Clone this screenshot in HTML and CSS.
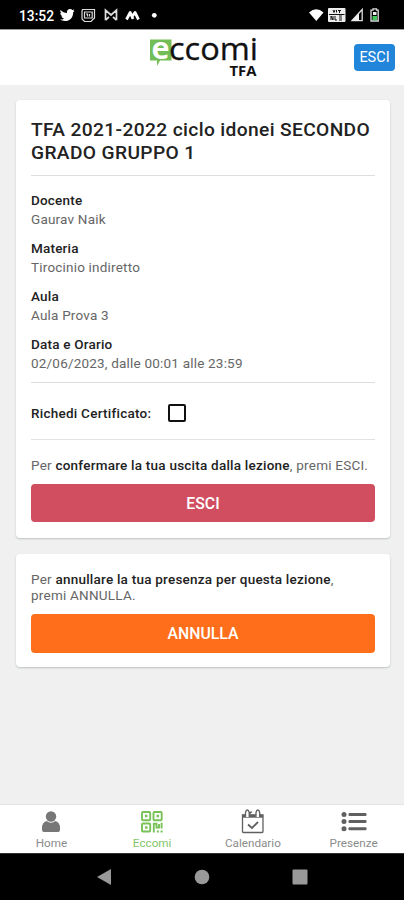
FILE: index.html
```html
<!DOCTYPE html>
<html lang="it">
<head>
<meta charset="utf-8">
<meta name="viewport" content="width=device-width, initial-scale=1">
<title>Eccomi TFA</title>
<link rel="stylesheet" href="styles.css">
</head>
<body>
<div class="status">
  <span class="clock">13:52</span>
  <svg class="status-left" width="100" height="18" viewBox="0 0 100 18">
    <path fill="#fff" d="M0.5 3C2.5 5 4.5 5.8 7 5.9C6.6 3.5 8.2 2 10 2C11 2 11.8 2.4 12.4 3L14.2 2.4L13.3 4L14.6 3.7L13.1 5.4C13.2 10.5 9.8 14 5 14C3 14 1.3 13.5 0 12.6C1.7 12.7 3 12.2 4.1 11.4C2.7 11.2 1.8 10.4 1.4 9.2H2.7C1.2 8.7.3 7.5.3 6L1.6 6.3C.4 5.3 0 4.3.5 3Z"/>
    <path fill="none" stroke="#ddd" stroke-width="1.2" d="M22.5 2.5H34.5V11L31 14.5H24.5L22 12V4Z"/>
    <path fill="none" stroke="#ddd" stroke-width="1.2" d="M24.5 5H32.2V11H24.5ZM26 7H27.5V9.5M29.5 7V9.5"/>
    <path fill="none" stroke="#ddd" stroke-width="1.7" d="M45.500 13.200V3.200L51 8L56.500 3.200V13.200M45.500 13L49 10M56.500 13L53 10"/>
    <path fill="none" stroke="#fff" stroke-width="2.800" stroke-linejoin="round" d="M66.500 12.500L70.200 5.500L73 12M72.500 9L75 5.500L78.500 12.500"/>
    <circle cx="94.300" cy="8.300" r="2.400" fill="#fff"/>
  </svg>
  <svg class="status-right" width="72" height="18" viewBox="0 0 72 18">
    <path fill="#fff" d="M0 5.500Q7.300-1.200 14.500 5.500L7.300 14Z"/>
    <rect x="19" y="1" width="17.500" height="14" rx="1" fill="#eee"/>
    <path stroke="#111" stroke-width="1" fill="none" d="M24 3L25 5.500L26 3M27.500 3V5.500M29 3.500H32M30.500 3.500V6M22 13V9L24 13V9M26 9V13H28M30 9H33M30 11H33M30 13H33M20 7.500H35.500"/>
    <path fill="none" stroke="#ddd" stroke-width="1.300" d="M43 13.600H53.200V2.500Z"/>
    <path fill="#eee" d="M42.500 14L50 6V14Z"/>
    <path fill="none" stroke="#ddd" stroke-width="1.300" d="M62 3.200H64V1.800H67.500V3.200H69.200V14H62Z"/>
    <rect x="63.500" y="9" width="4.500" height="4.200" fill="#43c95b"/>
    <path fill="#eee" d="M64 5H67.500V8H64Z"/>
  </svg>
</div>
<header class="header">
  <svg class="logo" width="112" height="54" viewBox="0 0 112 54">
    <path fill="#72bd55" d="M2 9.500H23.500V30.500H12L9 36V30.500H2Z"/>
    <text class="logo-e" x="3.500" y="29" textLength="18" lengthAdjust="spacingAndGlyphs">e</text>
    <text class="logo-name" x="21" y="30" textLength="89" lengthAdjust="spacingAndGlyphs">ccomi</text>
    <text class="logo-sub" x="81.500" y="46" textLength="27" lengthAdjust="spacingAndGlyphs">TFA</text>
  </svg>
  <button class="exit">ESCI</button>
</header>
<main class="content">
  <section class="card lesson">
    <h1>TFA 2021-2022 ciclo idonei SECONDO<br>GRADO GRUPPO 1</h1>
    <dl>
      <dt>Docente</dt><dd>Gaurav Naik</dd>
      <dt>Materia</dt><dd>Tirocinio indiretto</dd>
      <dt>Aula</dt><dd>Aula Prova 3</dd>
      <dt>Data e Orario</dt><dd>02/06/2023, dalle 00:01 alle 23:59</dd>
    </dl>
    <label class="certificate"><b>Richedi Certificato:</b><span class="box"></span></label>
    <p class="confirm">Per <b>confermare la tua uscita dalla lezione</b>, premi ESCI.</p>
    <button class="action red">ESCI</button>
  </section>
  <section class="card cancel">
    <p class="annul">Per <b>annullare la tua presenza per questa lezione</b>,<br>premi ANNULLA.</p>
    <button class="action orange">ANNULLA</button>
  </section>
</main>
<nav class="tabs">
  <a class="tab"><svg width="26" height="26" viewBox="0 0 26 26"><circle cx="13" cy="7.500" r="5.200" fill="#777"/><path fill="#777" d="M8.500 12Q13 15.500 17.500 12Q22 13.500 22 19V21Q22 23 20 23H6Q4 23 4 21V19Q4 13.500 8.500 12Z"/></svg><span>Home</span></a>
  <a class="tab active"><svg width="26" height="26" viewBox="0 0 26 26" fill="none" stroke="#78c257" stroke-width="1.900"><rect x="3" y="3" width="8.200" height="8.200" rx="1"/><rect x="14.500" y="3" width="8.200" height="8.200" rx="1"/><rect x="3" y="14.500" width="8.200" height="8" rx="1"/><path d="M6 7H8.500M17.500 7H20M6 18.500H8.500" stroke-width="2.400"/><path d="M14.800 23.500V14.800H17.500V18.500H20V15M22.600 13.800V19.500M17.800 22.500H19.800M21.600 22.500H23.600"/></svg><span>Eccomi</span></a>
  <a class="tab"><svg width="26" height="26" viewBox="0 0 26 26" fill="none" stroke="#606060" stroke-width="1.300"><path d="M2.500 6H23V22.500Q23 23.500 22 23.500H3.500Q2.500 23.500 2.500 22.500Z"/><path d="M2.500 7.200H23" stroke-width="3"/><path stroke="#fff" stroke-width="4" d="M7.200 4V8M17.800 4V8"/><path d="M5.500 8V3.500Q6 1 7.300 1Q8.700 1 9.200 3.500V8M16 8V3.500Q16.500 1 17.800 1Q19.200 1 19.700 3.500V8M10 5Q10.500 2 12 3.500"/><path d="M8 15.500L12 19L18 13" stroke-width="1.800"/></svg><span>Calendario</span></a>
  <a class="tab"><svg width="26" height="26" viewBox="0 0 26 26" fill="#606060"><circle cx="3" cy="5.500" r="2.500"/><circle cx="3" cy="12.500" r="2.500"/><circle cx="3" cy="19.700" r="2.500"/><rect x="7.500" y="4" width="18" height="3" rx="1"/><rect x="7.500" y="11" width="18" height="3" rx="1"/><rect x="7.500" y="18.200" width="18" height="3" rx="1"/></svg><span>Presenze</span></a>
</nav>
<footer class="system">
  <svg width="16" height="18" viewBox="0 0 16 18"><path fill="#999" d="M1 9L15 1V17Z"/></svg>
  <svg width="16" height="16" viewBox="0 0 16 16"><circle cx="8" cy="8" r="7.300" fill="#999"/></svg>
  <svg width="16" height="16" viewBox="0 0 16 16"><rect x=".5" y=".5" width="15" height="15" rx="1" fill="#999"/></svg>
</footer>
</body>
</html>
```
FILE: styles.css
```css
* { box-sizing: border-box; }
body { margin: 0; width: 404px; height: 900px; overflow: hidden; display: flex; flex-direction: column; background: #f0f0f0; font-family: Roboto, "Liberation Sans", sans-serif; color: #222; }
button { border: 0; padding: 0; font-family: inherit; color: #fff; }
.status { height: 29px; background: #000; display: flex; align-items: flex-start; padding: 7px 24px 0 19px; }
.clock { color: #fff; font-size: 13.8px; font-weight: 500; line-height: 18px; width: 41px; }
.status-right { margin-left: auto; margin-right: -1px; }
.header { height: 56px; background: #fff; border-top: 1px solid #999; display: flex; padding-right: 9px; justify-content: flex-end; }
.logo { margin: 0 94px 0 0; overflow: visible; }
.logo text { font-family: "Open Sans", sans-serif; }
.logo-e { font-size: 31px; font-weight: 700; fill: #fff; }
.logo-name { font-size: 31px; font-weight: 500; fill: #111; stroke: #111; stroke-width: .3px; }
.logo-sub { font-size: 14px; font-weight: 700; fill: #111; }
.exit { width: 41px; height: 27px; margin-top: 14px; border-radius: 4px; background: #2185d9; font-size: 14.5px; }
.content { flex: 1; padding: 15px 14px 0 16px; display: flex; flex-direction: column; gap: 16px; }
.card { background: #fff; border-radius: 4px; padding: 0 15px; box-shadow: 0 1px 2px rgba(70, 90, 90, .3); }
.lesson { height: 438px; }
.cancel { height: 113px; }
h1 { margin: 0; height: 76px; padding-top: 18px; border-bottom: 1px solid #ddd; font-size: 19.2px; font-weight: 500; line-height: 23px; letter-spacing: .36px; white-space: nowrap; }
dl { margin: 0; height: 207px; padding-top: 15px; border-bottom: 1px solid #ddd; font-size: 13.5px; letter-spacing: .2px; }
dt { height: 19px; line-height: 19px; font-weight: 500; }
dd { margin: 0 0 10px; height: 19px; line-height: 19px; color: #666; }
b { font-weight: 500; color: #222; }
.certificate { height: 57px; display: flex; align-items: center; gap: 17px; border-bottom: 1px solid #e2e2e2; padding-top: 4px; font-size: 13.5px; letter-spacing: .25px; }
.box { width: 18px; height: 18px; border: 2px solid #111; border-radius: 2px; }
p { margin: 0; font-size: 13.5px; letter-spacing: .23px; line-height: 17px; color: #666; white-space: nowrap; }
.confirm { height: 44px; padding-top: 17px; }
.annul { height: 60px; padding-top: 17px; line-height: 16px; }
.action { display: block; width: 100%; height: 38px; border-radius: 4px; font-size: 15.8px; font-weight: 500; }
.red { background: #d14e60; }
.orange { background: #ff6f1b; height: 39px; }
.tabs { height: 49px; background: #fff; border-top: 1px solid #e5e5e5; display: grid; grid-template-columns: repeat(4, 1fr); padding-left: 1px; }
.tab { display: flex; flex-direction: column; align-items: center; padding-top: 4px; font-size: 11.7px; line-height: 16px; color: #8b8b8b; }
.tab svg { flex: none; }
.tab.active { color: #84c568; }
.system { height: 47px; background: #000; border-top: 1px solid #333; display: flex; align-items: center; justify-content: center; gap: 82px; padding: 0; }
```
